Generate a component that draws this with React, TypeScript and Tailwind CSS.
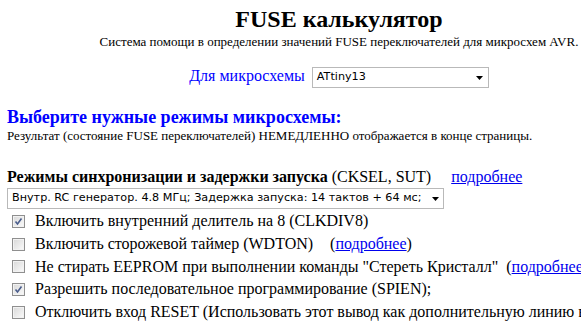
import React from "react";

function Arrow() {
  return (
    <svg width="7" height="4" viewBox="0 0 7 4" className="block">
      <polygon points="0,0 7,0 3.5,4" fill="#000" />
    </svg>
  );
}

function Check({ checked }: { checked?: boolean }) {
  return (
    <div className="w-[13px] h-[13px] shrink-0 border border-[#8f8f8f] bg-gradient-to-br from-[#d8d8d8] to-[#fbfbfb] shadow-[inset_0_0_0_1px_#f2f2f2] flex items-center justify-center">
      {checked && (
        <svg width="9" height="9" viewBox="0 0 9 9" className="block">
          <path d="M1.5 4.5 L3.5 7 L7.5 1.5" stroke="#4a5d8c" strokeWidth="1.6" fill="none" />
        </svg>
      )}
    </div>
  );
}

function Row({ checked, children }: { checked?: boolean; children: React.ReactNode }) {
  return (
    <div className="h-[22.75px] flex items-center pl-[5px] whitespace-nowrap">
      <Check checked={checked} />
      <span className="ml-[10px] text-[16px] leading-[22.75px]">{children}</span>
    </div>
  );
}

export default function App() {
  return (
    <div className="w-[581px] h-[325px] overflow-hidden bg-white text-black font-['Liberation_Serif',serif]">
      <div className="w-[678px] flex flex-col items-center text-center">
        <h1 className="mt-[5px] text-[24px] leading-[28px] font-bold">FUSE калькулятор</h1>
        <div className="mt-[1px] text-[13px] leading-[15px] whitespace-nowrap">
          Система помощи в определении значений FUSE переключателей для микросхем AVR.
        </div>
        <div className="mt-[18px] flex items-start gap-[7px]">
          <span className="text-[16px] leading-[18px] text-[#0000ff]">Для микросхемы</span>
          <div className="w-[177px] h-[21px] border border-[#b9b9b9] bg-white flex items-center justify-between pl-[4px] pr-[5px] font-['DejaVu_Sans',sans-serif] text-[11.2px]">
            <span>ATtiny13</span>
            <Arrow />
          </div>
        </div>
      </div>
      <div className="pl-[7px]">
        <div className="mt-[19px] text-[18px] leading-[20px] font-bold text-[#0000ff] whitespace-nowrap">
          Выберите нужные режимы микросхемы:
        </div>
        <div className="mt-[1px] text-[13px] leading-[15px] whitespace-nowrap">
          Результат (состояние FUSE переключателей) НЕМЕДЛЕННО отображается в конце страницы.
        </div>
        <div className="mt-[25px] text-[16px] leading-[18px] whitespace-nowrap">
          <b>Режимы синхронизации и задержки запуска</b> (CKSEL, SUT)
          <a className="ml-[20px] text-[#0000ee] underline" href="#">подробнее</a>
        </div>
        <div className="mt-[2px] w-[437px] h-[21px] border border-[#b9b9b9] bg-white flex items-center justify-between pl-[4px] pr-[4px] font-['DejaVu_Sans',sans-serif] text-[11.2px] whitespace-nowrap">
          <span>Внутр. RC генератор. 4.8 МГц; Задержка запуска: 14 тактов + 64 мс;</span>
          <Arrow />
        </div>
        <div className="mt-[1px]">
          <Row checked>Включить внутренний делитель на 8 (CLKDIV8)</Row>
          <Row>
            Включить сторожевой таймер (WDTON)
            <span className="ml-[17px]">(<a className="text-[#0000ee] underline" href="#">подробнее</a>)</span>
          </Row>
          <Row>
            Не стирать EEPROM при выполнении команды "Стереть Кристалл"
            <span className="ml-[8px]">(<a className="text-[#0000ee] underline" href="#">подробнее</a>)</span>
          </Row>
          <Row checked>Разрешить последовательное программирование (SPIEN);</Row>
          <Row>Отключить вход RESET (Использовать этот вывод как дополнительную линию ввода-вывода)</Row>
        </div>
      </div>
    </div>
  );
}
